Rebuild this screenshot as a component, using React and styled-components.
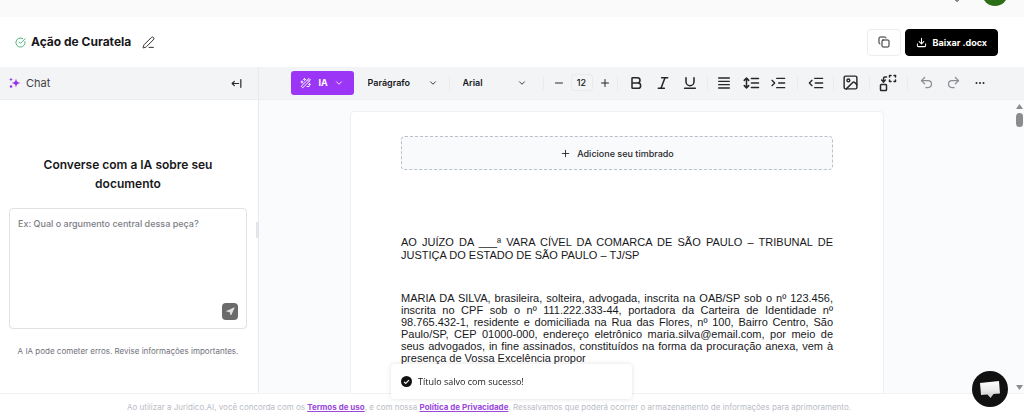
import React from "react";
import styled, { createGlobalStyle } from "styled-components";
import {
  Bold,
  ChevronDown,
  CircleCheckBig,
  Copy,
  Image,
  Italic,
  Minus,
  Navigation,
  PenLine,
  Plus,
  Redo2,
  Underline,
  Undo2,
} from "lucide-react";

const GlobalStyle = createGlobalStyle`
  *, *::before, *::after { box-sizing: border-box; }
  html, body, #root { height: 100%; }
  body {
    margin: 0;
    background: #fff;
    color: #18181b;
    font-family: Inter, "Liberation Sans", sans-serif;
    font-size: 9px;
    overflow: hidden;
  }
  button, input, select, textarea { font: inherit; color: inherit; margin: 0; }
  button, select { cursor: pointer; }
  svg { display: block; flex: none; }
`;

const Page = styled.div`
  display: flex;
  flex-direction: column;
  height: 100%;
`;

const TopBar = styled.div`
  display: flex;
  justify-content: flex-end;
  align-items: flex-end;
  flex: none;
  height: 17px;
  padding: 0 16px 11px 0;
  background: #fafafa;
  overflow: hidden;
`;

const AccountMenu = styled.button`
  display: flex;
  align-items: flex-end;
  gap: 19px;
  padding: 0;
  border: 0;
  background: none;
`;

const Avatar = styled.span`
  width: 26px;
  height: 26px;
  border-radius: 50%;
  background: #2c6e14;
`;

const TitleBar = styled.header`
  display: flex;
  align-items: center;
  justify-content: space-between;
  flex: none;
  height: 50px;
  padding: 0 26px 0 15px;
`;

const TitleGroup = styled.div`
  display: flex;
  align-items: center;
  gap: 5px;
`;

const Title = styled.h1`
  margin: 0 6px 0 0;
  font-size: 12px;
  line-height: 16px;
  font-weight: 700;
`;

const GhostButton = styled.button`
  display: flex;
  align-items: center;
  justify-content: center;
  padding: 0;
  border: 0;
  background: none;
  color: ${(p) => p.$color || "#27272a"};
`;

const Actions = styled.div`
  display: flex;
  gap: 4px;
`;

const ActionButton = styled.button`
  display: flex;
  align-items: center;
  justify-content: center;
  gap: 6px;
  height: 27px;
  padding: 0 10px;
  border: 1px solid ${(p) => (p.$primary ? "#000" : "#ececef")};
  border-radius: 4px;
  background: ${(p) => (p.$primary ? "#000" : "#fff")};
  color: ${(p) => (p.$primary ? "#fff" : "#27272a")};
  font-weight: 700;
`;

const Workspace = styled.div`
  display: flex;
  flex: 1;
  min-height: 0;
  border-bottom: 1px solid #f1f2f4;
`;

const ChatPanel = styled.aside`
  display: flex;
  flex-direction: column;
  flex: none;
  width: 259px;
  border-right: 1px solid #e9eaed;
`;

const ChatHeader = styled.div`
  display: flex;
  align-items: center;
  gap: 5px;
  flex: none;
  height: 33px;
  padding: 0 15px 0 9px;
  background: #f3f4f6;
  border-bottom: 1px solid #eceef0;
`;

const ChatTitle = styled.h2`
  flex: 1;
  margin: 0;
  font-size: 11px;
  font-weight: 400;
  color: #3f3f46;
`;

const ChatBody = styled.div`
  display: flex;
  flex-direction: column;
  flex: 1;
  padding: 55px 11px 0 9px;
  text-align: center;
`;

const ChatPrompt = styled.h3`
  margin: 0 24px 15px;
  font-size: 12px;
  line-height: 19px;
  font-weight: 600;
`;

const Composer = styled.form`
  display: grid;
  height: 121px;
  border: 1px solid #dfe1e5;
  border-radius: 4px;
  > * { grid-area: 1 / 1; }
`;

const ComposerText = styled.textarea`
  padding: 8px;
  border: 0;
  border-radius: 4px;
  outline: 0;
  background: none;
  font-size: 9px;
  font-weight: 500;
  line-height: 13px;
  resize: none;
  &::placeholder { color: #7b7e85; opacity: 1; }
`;

const SendButton = styled.button`
  display: flex;
  align-items: center;
  justify-content: center;
  place-self: end;
  width: 16px;
  height: 17px;
  margin: 8px;
  padding: 0;
  border: 0;
  border-radius: 4px;
  background: #6b6b6b;
  color: #e4e4e4;
`;

const Disclaimer = styled.p`
  margin: 16px 0 0;
  font-size: 8px;
  line-height: 12px;
  color: #71717a;
  white-space: nowrap;
`;

const ResizeHandle = styled.div`
  align-self: center;
  flex: none;
  width: 3px;
  height: 16px;
  margin: 0 0 0 -3px;
  background: #e2e6ea;
`;

const Editor = styled.main`
  display: flex;
  flex-direction: column;
  flex: 1;
  min-width: 0;
`;

const Toolbar = styled.div`
  display: flex;
  align-items: center;
  justify-content: center;
  flex: none;
  height: 33px;
  padding: 0 0 1px 1px;
  background: #f3f4f6;
  border-bottom: 1px solid #eceef0;
`;

const AiButton = styled.button`
  display: flex;
  align-items: center;
  justify-content: center;
  gap: 6px;
  width: 63px;
  height: 24px;
  margin-right: 4px;
  padding: 0;
  border: 0;
  border-radius: 3px;
  background: #9b36f7;
  color: #fff;
  font-weight: 700;
`;

const SelectBox = styled.label`
  display: grid;
  align-items: center;
  width: ${(p) => p.$width}px;
  > * { grid-area: 1 / 1; }
  svg { justify-self: end; margin-right: 8px; pointer-events: none; }
`;

const Select = styled.select`
  height: 24px;
  padding: 0 10px;
  border: 0;
  outline: 0;
  background: none;
  appearance: none;
  font-weight: 600;
`;

const Separator = styled.span`
  flex: none;
  width: 1px;
  height: 14px;
  margin: 0 ${(p) => p.$space || 5}px;
  background: #eaebee;
`;

const Stepper = styled.div`
  display: flex;
  align-items: center;
  gap: 5px;
`;

const StepButton = styled(GhostButton)`
  width: 14px;
  height: 24px;
`;

const SizeInput = styled.input`
  width: 22px;
  height: 17px;
  padding: 0;
  border: 1px solid #e9ebee;
  border-radius: 3px;
  background: none;
  font-weight: 500;
  text-align: center;
`;

const ToolButton = styled(GhostButton)`
  flex: none;
  width: 27px;
  height: 24px;
`;

const Viewport = styled.div`
  display: flex;
  flex: 1;
  min-height: 0;
  background: #fafbfc;
`;

const Canvas = styled.div`
  flex: 1;
  min-width: 0;
  padding: 11px 37px 0 0;
  overflow: hidden;
`;

const Paper = styled.article`
  max-width: 534px;
  min-height: 100%;
  margin: 0 auto;
  padding: 24px 50px;
  border: 1px solid #eef0f3;
  border-radius: 4px 4px 0 0;
  background: #fff;
`;

const LetterheadButton = styled.button`
  display: flex;
  align-items: center;
  justify-content: center;
  gap: 6px;
  width: 100%;
  height: 34px;
  margin-bottom: 66px;
  border: 1px dashed #b9c0c9;
  border-radius: 4px;
  background: #f9fafc;
  color: #27272a;
  font-weight: 500;
`;

const Paragraph = styled.p`
  margin: 0 0 30px;
  font-family: "Liberation Sans", Arial, sans-serif;
  font-size: 11px;
  line-height: ${(p) => p.$leading || 13}px;
  text-align: justify;
`;

const ScrollTrack = styled.div`
  display: flex;
  flex-direction: column;
  align-items: center;
  gap: 4px;
  flex: none;
  width: 12px;
  padding: 4px 0 3px 2px;
  color: #8b8b8b;
`;

const ScrollThumb = styled.div`
  width: 7px;
  height: 14px;
  margin-bottom: auto;
  border-radius: 4px;
  background: #8b8b8b;
`;

const Footer = styled.footer`
  flex: none;
  height: 24px;
  padding: 0 46px 0 0;
  font-size: 8px;
  line-height: 26px;
  text-align: center;
  white-space: nowrap;
  color: #b9bdc6;
`;

const FooterLink = styled.a`
  color: #9a48dc;
  font-weight: 700;
  text-decoration: underline;
`;

const Toast = styled.div`
  position: fixed;
  left: 50%;
  bottom: 19px;
  display: flex;
  align-items: center;
  gap: 6px;
  width: 241px;
  height: 35px;
  margin-left: -121px;
  padding: 0 10px;
  border-radius: 4px;
  background: #fff;
  box-shadow: 0 0 5px rgba(0, 0, 0, 0.12);
  font-family: "Open Sans", "Noto Sans", sans-serif;
  font-weight: 500;
`;

const HelpButton = styled.button`
  position: fixed;
  right: 16px;
  bottom: 11px;
  display: flex;
  align-items: center;
  justify-content: center;
  width: 36px;
  height: 36px;
  padding: 0;
  border: 0;
  border-radius: 50%;
  background: #111;
`;

function Glyph({ size = 16, width = 2, children }) {
  return (
    <svg
      width={size}
      height={size}
      viewBox="0 0 24 24"
      fill="none"
      stroke="currentColor"
      strokeWidth={width}
      strokeLinecap="round"
      strokeLinejoin="round"
      aria-hidden="true"
    >
      {children}
    </svg>
  );
}

const SparkIcon = () => (
  <svg width="12" height="12" viewBox="0 0 24 24" fill="#9333ea" aria-hidden="true">
    <path d="M14 3c1 6 3 8 9 9-6 1-8 3-9 9-1-6-3-8-9-9 6-1 8-3 9-9z" />
    <path d="M4 1c.4 2.700 1.300 3.600 4 4-2.700.4-3.600 1.300-4 4-.4-2.700-1.300-3.600-4-4 2.700-.4 3.600-1.300 4-4z" />
    <circle cx="4" cy="19" r="2.500" />
  </svg>
);

const CollapseIcon = () => (
  <Glyph size={13} width={2.2}>
    <path d="M16 12H4M8 8l-4 4 4 4M20 5v14" />
  </Glyph>
);

const DownloadIcon = () => (
  <Glyph size={11} width={2.2}>
    <path d="M3 15v4a2 2 0 0 0 2 2h14a2 2 0 0 0 2-2v-4M7 10l5 5 5-5M12 15V3" />
  </Glyph>
);

const WandIcon = () => (
  <Glyph size={12} width={2}>
    <path d="M6 21 21 6l-3-3L3 18zM15 6l3 3M9 3a2 2 0 0 0 2 2 2 2 0 0 0-2 2 2 2 0 0 0-2-2 2 2 0 0 0 2-2M4 8v4M2 10h4M19 13a2 2 0 0 0 2 2 2 2 0 0 0-2 2 2 2 0 0 0-2-2 2 2 0 0 0 2-2M14 19h4" />
  </Glyph>
);

const JustifyIcon = () => (
  <Glyph>
    <path d="M4 4.500h16M4 9.500h16M4 14.500h16M4 19.500h16" />
  </Glyph>
);

const LineHeightIcon = () => (
  <Glyph size={18}>
    <path d="M3 8.500l3-3 3 3M3 15.500l3 3 3-3M6 6v12M12.500 6H22M12.500 12H22M12.500 18H22" />
  </Glyph>
);

const IndentIcon = () => (
  <Glyph>
    <path d="M10 5h12M13 12h9M10 19h12M3 8l4 4-4 4" />
  </Glyph>
);

const OutdentIcon = () => (
  <Glyph>
    <path d="M10 5h12M11 12h11M10 19h12M6 8l-4 4 4 4" />
  </Glyph>
);

const VariableIcon = () => (
  <Glyph size={18}>
    <rect x="2" y="14" width="8" height="8" rx="1" />
    <path d="M6 10.500V6a2 2 0 0 1 2-2h2" />
    <path d="M3.500 8 6 10.500 8.500 8" />
    <path d="M14 4V2h2M20 2h2v2M22 8v2h-2M16 10h-2V8" />
  </Glyph>
);

const MoreIcon = () => (
  <svg width="12" height="12" viewBox="0 0 12 12" fill="currentColor" aria-hidden="true">
    <circle cx="2.500" cy="6" r="1" />
    <circle cx="6" cy="6" r="1" />
    <circle cx="9.500" cy="6" r="1" />
  </svg>
);

const SuccessIcon = () => (
  <svg width="11" height="11" viewBox="0 0 20 20" aria-hidden="true">
    <circle cx="10" cy="10" r="10" fill="#111" />
    <path d="M5.500 10.500l3 3 6-6" fill="none" stroke="#fff" strokeWidth="2" />
  </svg>
);

const BubbleIcon = () => (
  <svg width="22" height="20" viewBox="0 0 22 20" aria-hidden="true">
    <defs>
      <linearGradient id="bubble" x1="0" y1="0" x2="0" y2="1">
        <stop offset="0" stopColor="#fff" />
        <stop offset="0.500" stopColor="#ededed" />
        <stop offset="1" stopColor="#c4c4c4" />
      </linearGradient>
    </defs>
    <path d="M1 4 20 2l1 12.500-6.500.5-3 4-3-3.500-6.500.5z" fill="url(#bubble)" />
  </svg>
);

const Arrow = ({ down }) => (
  <svg width="7" height="5" viewBox="0 0 7 5" fill="currentColor" aria-hidden="true">
    <path d={down ? "M0 0h7L3.500 5z" : "M0 5h7L3.500 0z"} />
  </svg>
);

export default function App() {
  return (
    <Page>
      <GlobalStyle />
      <TopBar>
        <AccountMenu type="button" aria-label="Conta">
          <ChevronDown size={12} />
          <Avatar />
        </AccountMenu>
      </TopBar>

      <TitleBar>
        <TitleGroup>
          <CircleCheckBig size={11} color="#3fae74" />
          <Title>Ação de Curatela</Title>
          <GhostButton type="button" aria-label="Editar título">
            <PenLine size={13} strokeWidth={1.8} />
          </GhostButton>
        </TitleGroup>
        <Actions>
          <ActionButton type="button" aria-label="Copiar">
            <Copy size={12} />
          </ActionButton>
          <ActionButton type="button" $primary>
            <DownloadIcon />
            Baixar .docx
          </ActionButton>
        </Actions>
      </TitleBar>

      <Workspace>
        <ChatPanel>
          <ChatHeader>
            <SparkIcon />
            <ChatTitle>Chat</ChatTitle>
            <GhostButton type="button" aria-label="Recolher chat">
              <CollapseIcon />
            </GhostButton>
          </ChatHeader>
          <ChatBody>
            <ChatPrompt>Converse com a IA sobre seu documento</ChatPrompt>
            <Composer onSubmit={(e) => e.preventDefault()}>
              <ComposerText
                aria-label="Mensagem"
                placeholder="Ex: Qual o argumento central dessa peça?"
              />
              <SendButton type="submit" aria-label="Enviar">
                <Navigation size={9} fill="currentColor" />
              </SendButton>
            </Composer>
            <Disclaimer>A IA pode cometer erros. Revise informações importantes.</Disclaimer>
          </ChatBody>
        </ChatPanel>
        <ResizeHandle />

        <Editor>
          <Toolbar role="toolbar" aria-label="Formatação">
            <AiButton type="button">
              <WandIcon />
              IA
              <ChevronDown size={10} />
            </AiButton>
            <SelectBox $width={88}>
              <Select aria-label="Estilo de texto">
                <option>Parágrafo</option>
              </Select>
              <ChevronDown size={10} />
            </SelectBox>
            <Separator $space={3} />
            <SelectBox $width={82}>
              <Select aria-label="Fonte">
                <option>Arial</option>
              </Select>
              <ChevronDown size={10} />
            </SelectBox>
            <Separator $space={8} />
            <Stepper>
              <StepButton type="button" aria-label="Diminuir fonte">
                <Minus size={12} />
              </StepButton>
              <SizeInput aria-label="Tamanho da fonte" defaultValue="12" />
              <StepButton type="button" aria-label="Aumentar fonte">
                <Plus size={12} />
              </StepButton>
            </Stepper>
            <Separator />
            <ToolButton type="button" aria-label="Negrito">
              <Bold size={16} strokeWidth={2.3} />
            </ToolButton>
            <ToolButton type="button" aria-label="Itálico">
              <Italic size={16} strokeWidth={2.3} />
            </ToolButton>
            <ToolButton type="button" aria-label="Sublinhado">
              <Underline size={16} strokeWidth={2.3} />
            </ToolButton>
            <Separator $space={3} />
            <ToolButton type="button" aria-label="Alinhamento">
              <JustifyIcon />
            </ToolButton>
            <ToolButton type="button" aria-label="Espaçamento">
              <LineHeightIcon />
            </ToolButton>
            <ToolButton type="button" aria-label="Aumentar recuo">
              <IndentIcon />
            </ToolButton>
            <Separator />
            <ToolButton type="button" aria-label="Diminuir recuo">
              <OutdentIcon />
            </ToolButton>
            <Separator $space={3} />
            <ToolButton type="button" aria-label="Imagem">
              <Image size={17} />
            </ToolButton>
            <Separator />
            <ToolButton type="button" aria-label="Substituir">
              <VariableIcon />
            </ToolButton>
            <Separator />
            <ToolButton type="button" aria-label="Desfazer" $color="#8b8d92">
              <Undo2 size={15} />
            </ToolButton>
            <ToolButton type="button" aria-label="Refazer" $color="#8b8d92">
              <Redo2 size={15} />
            </ToolButton>
            <ToolButton type="button" aria-label="Mais opções">
              <MoreIcon />
            </ToolButton>
          </Toolbar>

          <Viewport>
            <Canvas>
              <Paper>
                <LetterheadButton type="button">
                  <Plus size={11} />
                  Adicione seu timbrado
                </LetterheadButton>
                <Paragraph>
                  AO JUÍZO DA ___ª VARA CÍVEL DA COMARCA DE SÃO PAULO – TRIBUNAL DE JUSTIÇA DO
                  ESTADO DE SÃO PAULO – TJ/SP
                </Paragraph>
                <Paragraph $leading={12}>
                  MARIA DA SILVA, brasileira, solteira, advogada, inscrita na OAB/SP sob o nº
                  123.456, inscrita no CPF sob o nº 111.222.333-44, portadora da Carteira de
                  Identidade nº 98.765.432-1, residente e domiciliada na Rua das Flores, nº 100,
                  Bairro Centro, São Paulo/SP, CEP 01000-000, endereço eletrônico
                  maria.silva@email.com, por meio de seus advogados, in fine assinados,
                  constituídos na forma da procuração anexa, vem à presença de Vossa Excelência
                  propor
                </Paragraph>
              </Paper>
            </Canvas>
            <ScrollTrack aria-hidden="true">
              <Arrow />
              <ScrollThumb />
              <Arrow down />
            </ScrollTrack>
          </Viewport>
        </Editor>
      </Workspace>

      <Footer>
        Ao utilizar a Jurídico.AI, você concorda com os <FooterLink href="#termos">Termos de uso</FooterLink>,
        e com nossa <FooterLink href="#privacidade">Política de Privacidade</FooterLink>. Ressalvamos
        que poderá ocorrer o armazenamento de informações para aprimoramento.
      </Footer>

      <Toast role="status">
        <SuccessIcon />
        Título salvo com sucesso!
      </Toast>
      <HelpButton type="button" aria-label="Abrir atendimento">
        <BubbleIcon />
      </HelpButton>
    </Page>
  );
}
